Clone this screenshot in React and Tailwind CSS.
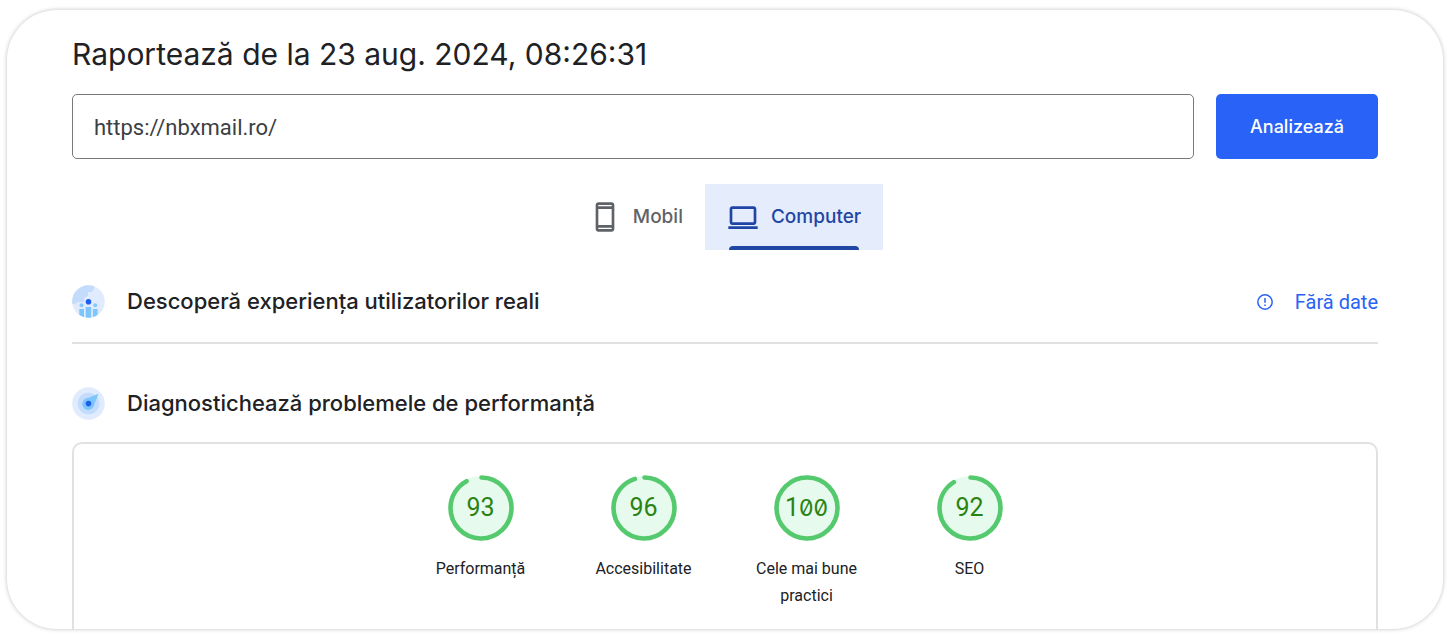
import { useState } from "react";

const SCORES = [
  { label: "Performanță", value: 93 },
  { label: "Accesibilitate", value: 96 },
  { label: "Cele mai bune practici", value: 100 },
  { label: "SEO", value: 92 },
];

function PhoneIcon() {
  return (
    <svg viewBox="0 0 24 24" className="size-8 shrink-0" fill="currentColor" aria-hidden="true">
      <path d="M17 1H7c-1.1 0-2 .9-2 2v18c0 1.1.9 2 2 2h10c1.1 0 2-.9 2-2V3c0-1.1-.9-2-2-2zm0 20H7v-1h10v1zm0-3H7V6h10v12zm0-14H7V3h10v1z" />
    </svg>
  );
}

function LaptopIcon() {
  return (
    <svg viewBox="0 0 24 24" className="size-8 shrink-0" fill="currentColor" aria-hidden="true">
      <path d="M20 4H4c-1.1 0-2 .9-2 2v10c0 1.1.9 2 2 2h16c1.1 0 2-.9 2-2V6c0-1.1-.9-2-2-2zm0 12H4V6h16v10zM1 19h22v2H1z" />
    </svg>
  );
}

function UsersIcon() {
  return (
    <svg viewBox="0 0 33 33" className="size-[33px] shrink-0" aria-hidden="true">
      <clipPath id="users-disc">
        <circle cx="16.5" cy="16.5" r="16.3" />
      </clipPath>
      <g clipPath="url(#users-disc)">
        <rect width="33" height="33" fill="#e0ecfd" />
        <path d="M0 0H22V4L20 7H16V11L12 13V17H6L3 19H0Z" fill="#c4dcfb" />
        <circle cx="9.5" cy="20.3" r="2" fill="#85c8fb" />
        <circle cx="23.2" cy="20.3" r="2" fill="#85c8fb" />
        <path d="M7.3 24H12V33H7.3ZM13.7 22H19.2V33H13.7ZM20.9 24H25.6V33H20.9Z" fill="#7cc6fb" />
        <circle cx="16.5" cy="17" r="4.2" fill="#e0ecfd" />
        <circle cx="16.5" cy="16.8" r="2.8" fill="#1f5eea" />
      </g>
    </svg>
  );
}

function GaugeIcon() {
  return (
    <svg viewBox="0 0 33 33" className="size-[33px] shrink-0" aria-hidden="true">
      <circle cx="16.5" cy="16.5" r="16.3" fill="#e0ecfd" />
      <circle cx="16.5" cy="16.5" r="10.8" fill="#c4dcfb" />
      <circle cx="16.5" cy="16.5" r="6" fill="#9fcdfa" />
      <path d="M26.5 6.8 13 12.2A5.8 5.8 0 1 0 21.4 19.5Z" fill="#7cc6fb" />
      <circle cx="16.5" cy="16.6" r="2.8" fill="#1f5eea" />
    </svg>
  );
}

function AlertIcon() {
  return (
    <svg viewBox="0 0 16 16" className="size-4 shrink-0" fill="none" stroke="currentColor" strokeWidth="1.5" aria-hidden="true">
      <circle cx="8" cy="8" r="7.2" />
      <path d="M8 4V8.8M8 10.4V12" />
    </svg>
  );
}

// Roboto has no slashed zero, so zeros are set in Inter.
function Digits({ value }) {
  return String(value)
    .split("")
    .map((digit, i) =>
      digit === "0" ? (
        <span key={i} className="font-[Inter,sans-serif] text-[23px] slashed-zero">
          0
        </span>
      ) : (
        digit
      ),
    );
}

function Score({ label, value }) {
  const radius = 30.5;
  const length = 2 * Math.PI * radius;
  const filled = value === 100 ? length : (length * value) / 100 - 2.5;
  return (
    <li className="flex w-[163px] flex-col items-center px-4">
      <div className="grid size-[66px] place-items-center">
        <svg viewBox="0 0 66 66" className="col-start-1 row-start-1 size-full" aria-hidden="true">
          <circle cx="33" cy="33" r="32" fill="#e6faee" />
          <circle
            cx="33"
            cy="33"
            r={radius}
            fill="none"
            stroke="#55c96d"
            strokeWidth="4.6"
            strokeLinecap="round"
            strokeDasharray={`${filled} ${length}`}
            transform="rotate(-89 33 33)"
          />
        </svg>
        <span className="col-start-1 row-start-1 text-[25px] leading-8 text-[#2b8313]">
          <Digits value={value} />
        </span>
      </div>
      <span className="mt-3.5 text-center text-base leading-[27px]">{label}</span>
    </li>
  );
}

const TABS = [
  { id: "mobile", label: "Mobil", Icon: PhoneIcon },
  { id: "desktop", label: "Computer", Icon: LaptopIcon },
];

export default function App() {
  const [url, setUrl] = useState("https://nbxmail.ro/");
  const [tab, setTab] = useState("desktop");

  return (
    <div className="bg-white px-[7px] pt-[10px] pb-[10px] font-[Roboto,sans-serif] text-[#202124]">
      <main className="rounded-[50px] bg-white px-[65px] pt-[22px] shadow-[0_0_4px_rgba(0,0,0,0.25)]">
        <h1 className="font-[Inter,sans-serif] text-[30px] leading-[44px]">Raportează de la 23 aug. 2024, 08:26:31</h1>

        <form className="mt-[18px] flex gap-[22px]" onSubmit={(e) => e.preventDefault()}>
          <input
            type="url"
            aria-label="Adresa paginii web"
            value={url}
            onChange={(e) => setUrl(e.target.value)}
            className="h-[65px] min-w-0 flex-1 rounded-[5px] border border-[#77797c] px-[21px] pt-0.5 text-[22px] text-[#3c4043]"
          />
          <button type="submit" className="w-[162px] rounded-[5px] bg-[#2962f6] font-[Inter,sans-serif] text-lg font-medium text-white">
            Analizează
          </button>
        </form>

        <div role="tablist" className="mt-[25px] flex justify-center">
          {TABS.map(({ id, label, Icon }) => (
            <button
              key={id}
              type="button"
              role="tab"
              aria-selected={tab === id}
              onClick={() => setTab(id)}
              className={`relative flex h-[66px] items-center gap-3 px-[22px] font-[Inter,sans-serif] text-[19px] font-medium ${
                tab === id ? "bg-[#e5ecfc] text-[#1f46a5]" : "text-[#5f6368]"
              }`}
            >
              <Icon />
              {label}
              {tab === id && <span className="absolute inset-x-6 bottom-0 h-1 rounded-t bg-[#1f46a5]" />}
            </button>
          ))}
        </div>

        <section className="mt-[35px] flex items-center gap-[22px] border-b-2 border-[#e1e1e1] pb-6">
          <UsersIcon />
          <h2 className="flex-1 font-[Inter,sans-serif] text-[22px] leading-[33px] font-[450]">Descoperă experiența utilizatorilor reali</h2>
          <a href="#date" className="flex items-center gap-[22px] text-xl text-[#2962f6]">
            <AlertIcon />
            Fără date
          </a>
        </section>

        <section className="mt-[43px]">
          <div className="flex items-center gap-[22px]">
            <GaugeIcon />
            <h2 className="font-[Inter,sans-serif] text-[22px] leading-[33px] font-[450]">Diagnostichează problemele de performanță</h2>
          </div>
          <ul className="mt-[22px] flex justify-center rounded-t-[10px] border-2 border-b-0 border-[#e1e1e1] pt-[31px] pb-5">
            {SCORES.map((score) => (
              <Score key={score.label} {...score} />
            ))}
          </ul>
        </section>
      </main>
    </div>
  );
}
